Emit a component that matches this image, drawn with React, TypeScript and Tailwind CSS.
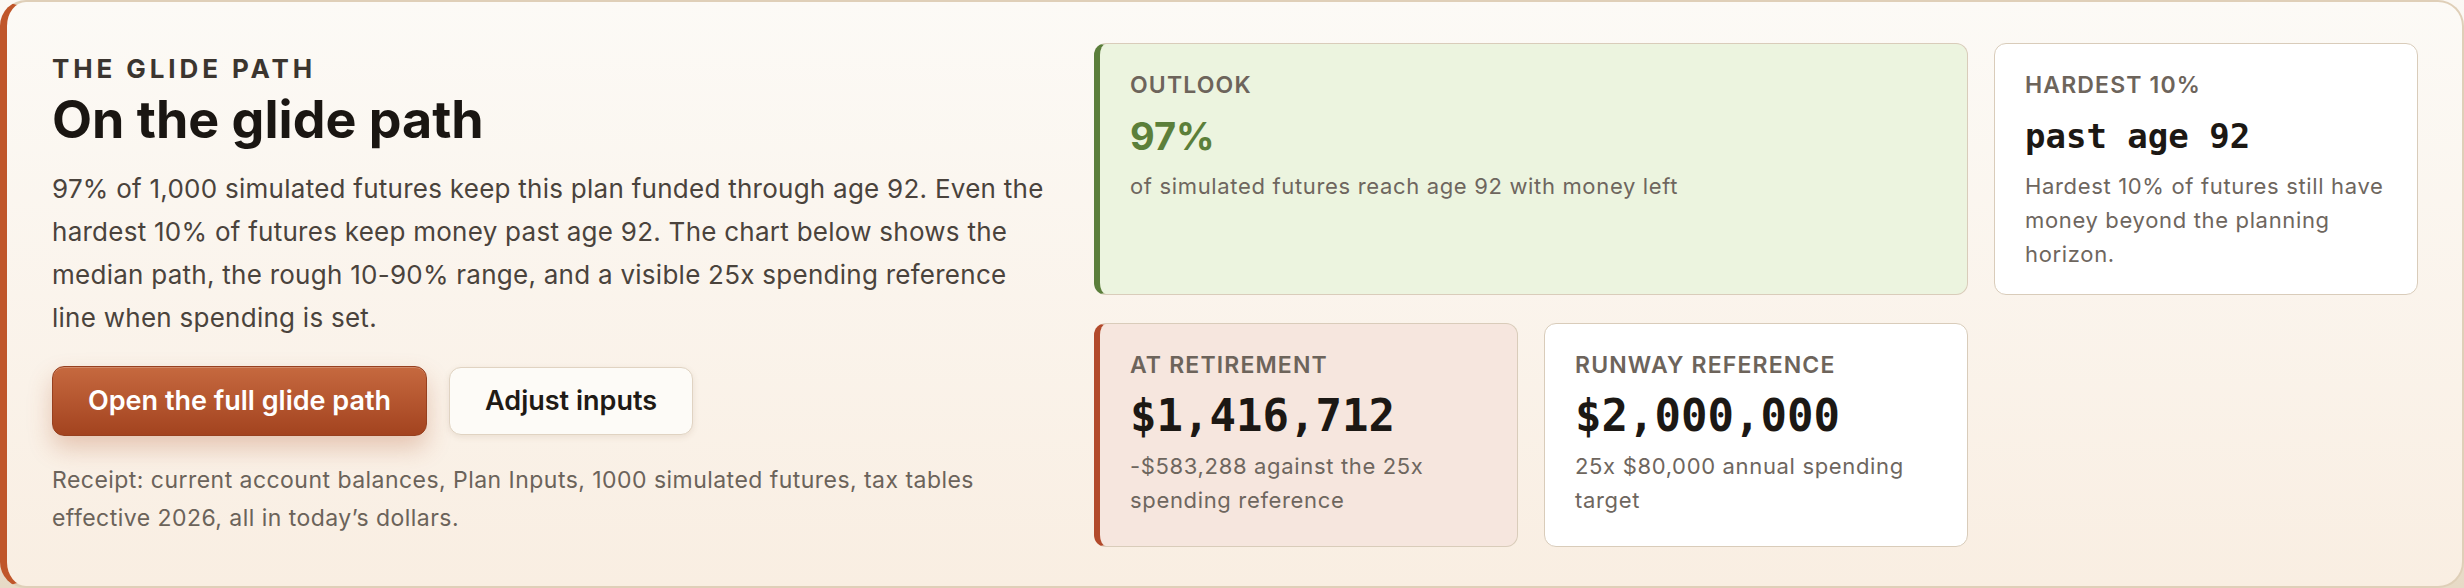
import React from 'react';

const SANS = { fontFamily: 'Inter, "Noto Sans", sans-serif' };
const MONO = { fontFamily: '"DejaVu Sans Mono", "Liberation Mono", monospace' };

type Card = {
  label: string;
  value: string;
  sub: string;
  tone: 'green' | 'rust' | 'plain';
  mono?: boolean;
  valueSize: string;
  span?: boolean;
};

const CARDS: Card[] = [
  {
    label: 'Outlook',
    value: '97%',
    sub: 'of simulated futures reach age 92 with money left',
    tone: 'green',
    valueSize: 'text-[38px]',
    span: true,
  },
  {
    label: 'Hardest 10%',
    value: 'past age 92',
    sub: 'Hardest 10% of futures still have money beyond the planning horizon.',
    tone: 'plain',
    mono: true,
    valueSize: 'text-[34px]',
  },
  {
    label: 'At retirement',
    value: '$1,416,712',
    sub: '-$583,288 against the 25x spending reference',
    tone: 'rust',
    mono: true,
    valueSize: 'text-[44px]',
  },
  {
    label: 'Runway reference',
    value: '$2,000,000',
    sub: '25x $80,000 annual spending target',
    tone: 'plain',
    mono: true,
    valueSize: 'text-[44px]',
  },
];

function StatCard({ card }: { card: Card }) {
  const toneClass =
    card.tone === 'green'
      ? 'bg-[#ecf4df] border-l-[6px] border-l-[#5b7e3b]'
      : card.tone === 'rust'
        ? 'bg-[#f6e6de] border-l-[6px] border-l-[#b24a2b]'
        : 'bg-white';
  const valueColor = card.tone === 'green' ? 'text-[#5b7f3a]' : 'text-[#1c1814]';

  return (
    <div
      className={`rounded-[12px] border border-[#d9ccba] pt-[27px] pl-[30px] pr-[20px] ${toneClass} ${
        card.span ? 'col-span-2' : ''
      }`}
    >
      <div className="text-[23px] leading-[28px] font-semibold uppercase tracking-[0.05em] text-[#6d645b]">
        {card.label}
      </div>
      <div
        className={`mt-[11px] leading-[52px] font-bold ${card.valueSize} ${valueColor}`}
        style={card.mono ? MONO : undefined}
      >
        {card.value}
      </div>
      <p className="mt-[7px] text-[22px] leading-[34px] tracking-[0.03em] text-[#6e665e]">{card.sub}</p>
    </div>
  );
}

export default function App() {
  return (
    <div className="w-[2464px] h-[588px] bg-linear-to-b from-[#fbf8f4] to-[#e7dac6]" style={SANS}>
      <section className="h-full rounded-[26px] border-2 border-[#dfcfb8] border-l-[7px] border-l-[#c0562a] bg-linear-to-b from-[#fcfaf6] to-[#f9eee2] pl-[45px] pr-[44px] pt-[41px] pb-[39px]">
        <div className="grid h-full grid-cols-[1010px_1fr] gap-x-[32px] items-center">
          <div>
            <div className="text-[26px] leading-[32px] font-bold uppercase tracking-[0.15em] text-[#3b352f]">
              The glide path
            </div>
            <h1 className="mt-[5px] text-[52px] leading-[60px] font-bold text-[#1a1612]">
              On the glide path
            </h1>
            <p className="mt-[17px] max-w-[995px] text-[26px] leading-[43px] tracking-[0.01em] text-[#4a433c]">
              97% of 1,000 simulated futures keep this plan funded through age 92. Even the hardest 10% of futures
              keep money past age 92. The chart below shows the median path, the rough 10-90% range, and a visible
              25x spending reference line when spending is set.
            </p>
            <div className="mt-[27px] flex items-center gap-[22px]">
              <button className="h-[70px] rounded-[12px] border border-[#97401f] bg-linear-to-b from-[#c6693f] to-[#a3431f] px-[35px] text-[27px] font-semibold text-white shadow-[inset_0_1px_0_rgba(255,255,255,0.22),0_12px_24px_rgba(176,82,40,0.28)]">
                Open the full glide path
              </button>
              <button className="h-[68px] rounded-[12px] border border-[#e0d3c2] bg-[#fdfbf7] px-[35px] text-[27px] font-semibold text-[#1f1a15] shadow-[0_2px_6px_rgba(120,90,60,0.12)]">
                Adjust inputs
              </button>
            </div>
            <p className="mt-[25px] text-[23px] leading-[38px] tracking-[0.02em] text-[#6b635a]">
              Receipt: current account balances, Plan Inputs, 1000 simulated futures, tax tables effective 2026, all
              in today&rsquo;s dollars.
            </p>
          </div>

          <div className="grid h-full grid-cols-3 grid-rows-[252px_224px] gap-x-[26px] gap-y-[28px]">
            {CARDS.map((c) => (
              <StatCard key={c.label} card={c} />
            ))}
          </div>
        </div>
      </section>
    </div>
  );
}
